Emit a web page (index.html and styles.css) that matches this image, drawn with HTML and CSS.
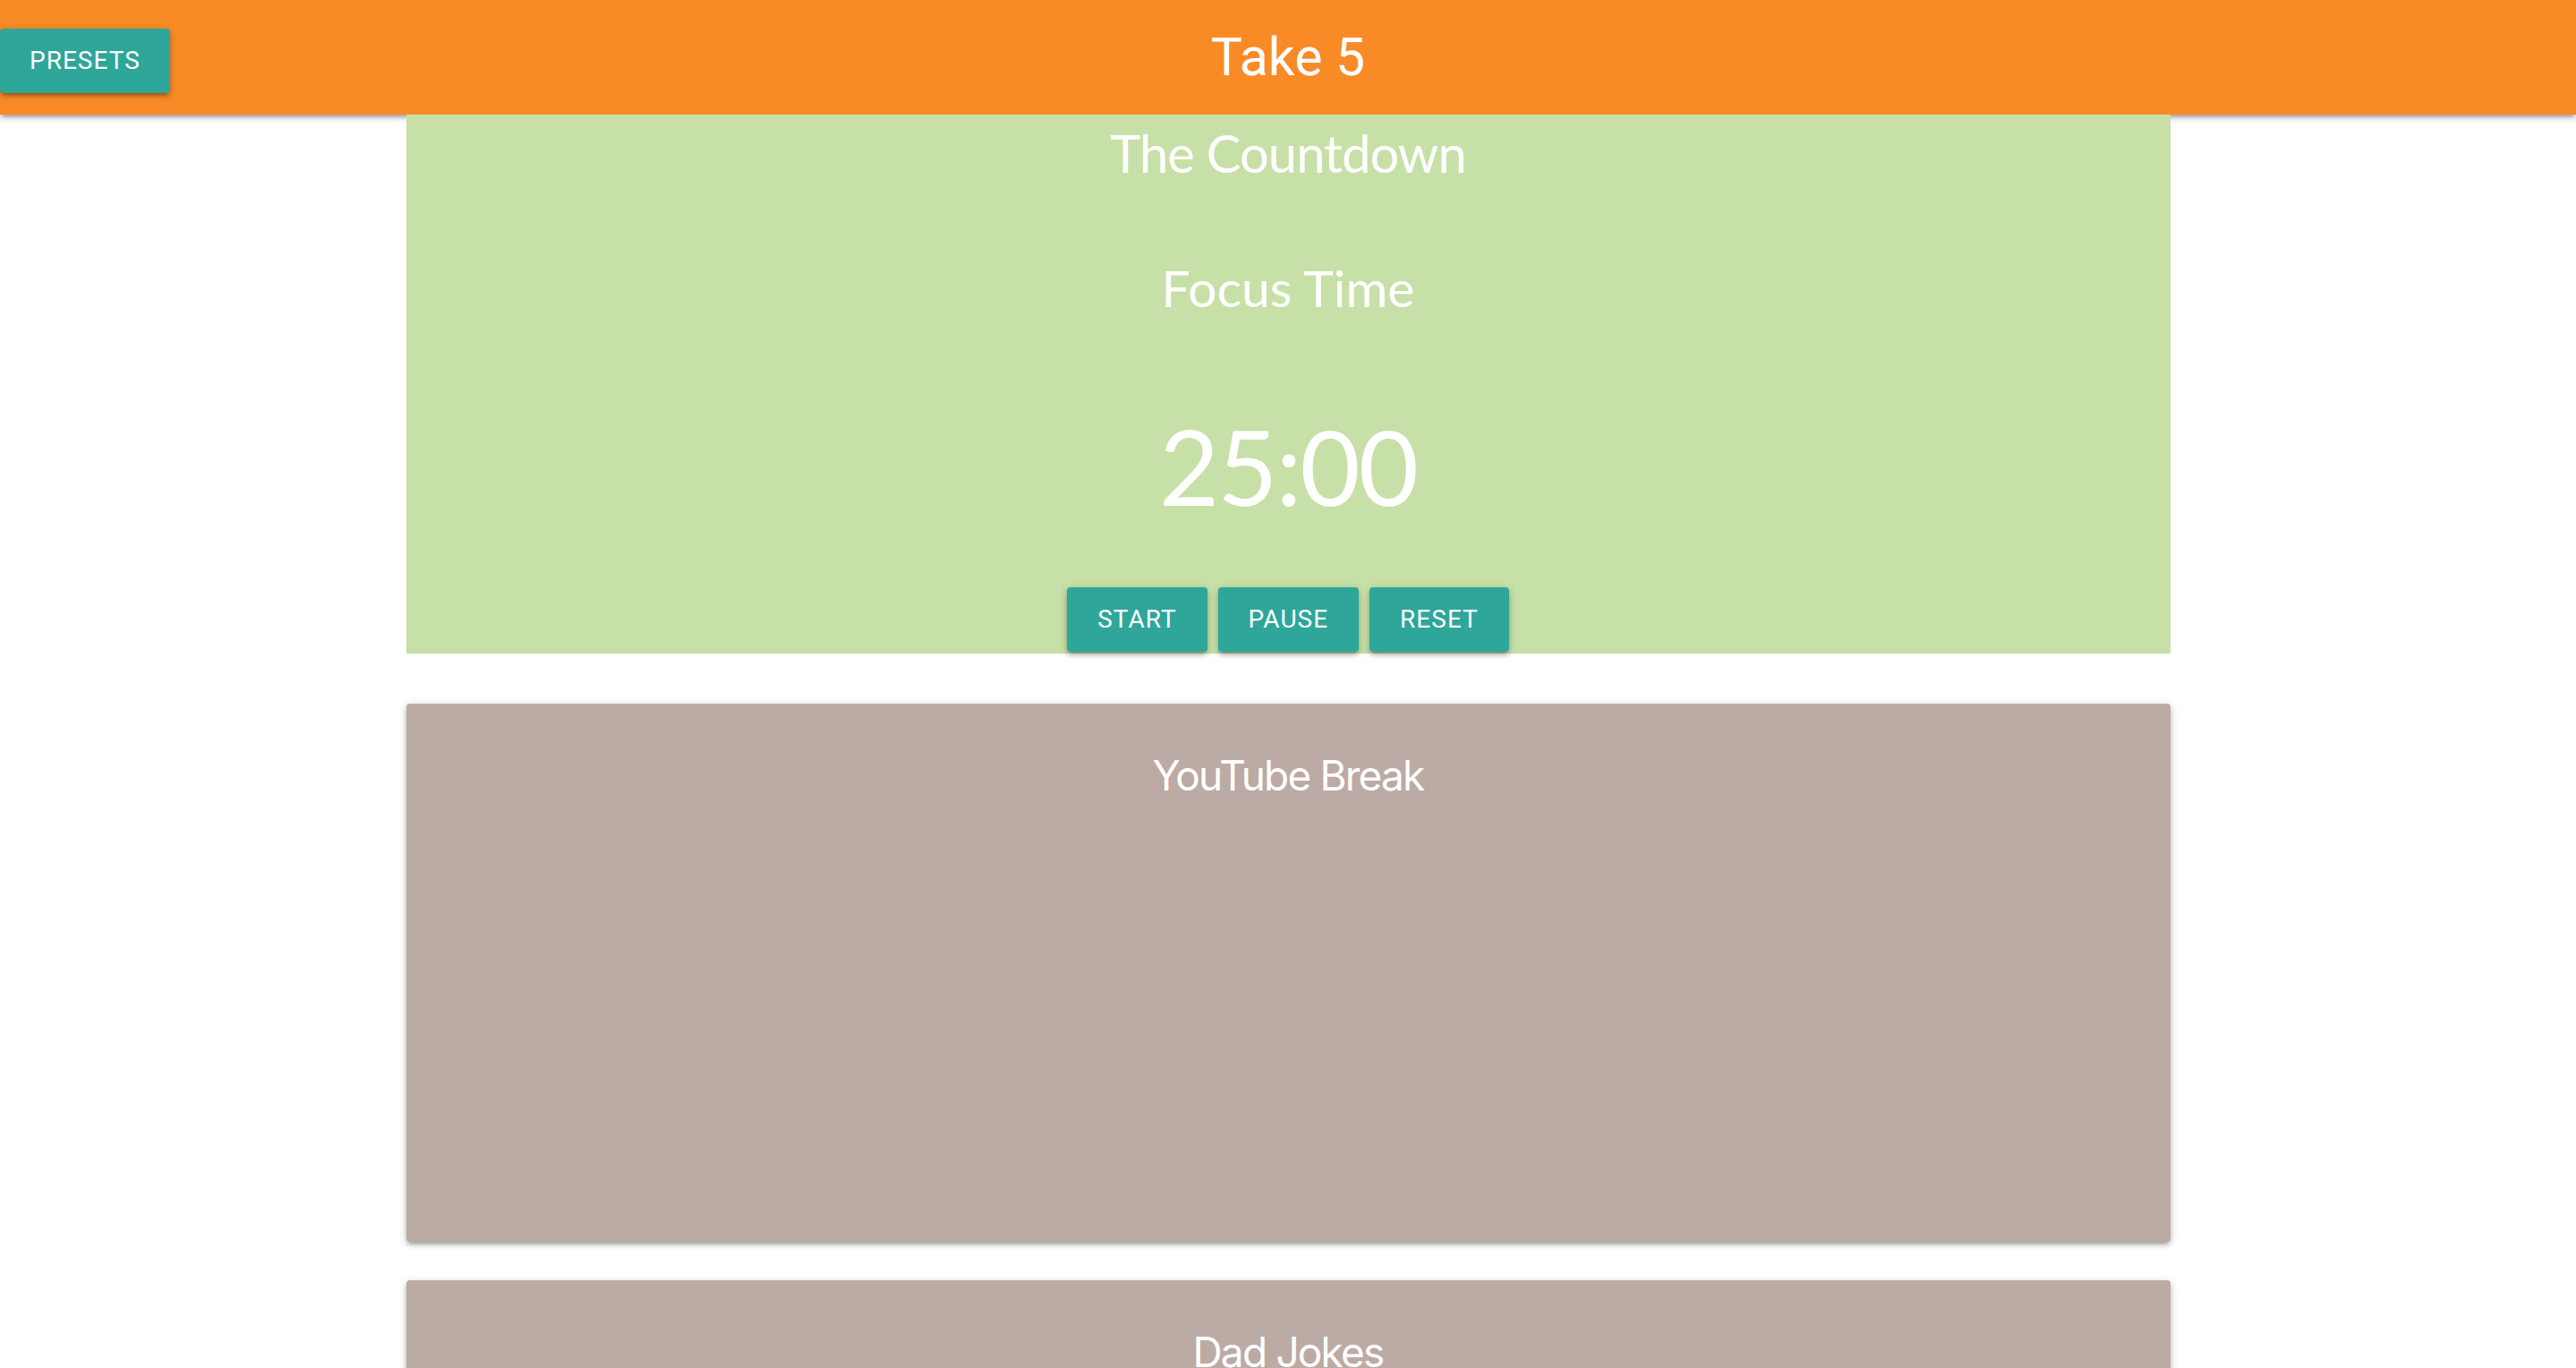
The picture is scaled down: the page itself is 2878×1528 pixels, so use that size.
FILE: index.html
```html
<!DOCTYPE html>
<html lang="en">
<head>
<meta charset="utf-8">
<title>Take 5</title>
<link rel="stylesheet" href="styles.css">
</head>
<body>
<header class="topbar">
  <div class="topbar-left"><button class="btn btn-presets">Presets</button></div>
  <h1 class="brand">Take 5</h1>
  <div class="topbar-right"></div>
</header>
<main class="container">
  <section class="countdown">
    <h2 class="cd-title">The Countdown</h2>
    <h3 class="cd-mode">Focus Time</h3>
    <div class="cd-time">25:00</div>
    <div class="cd-actions">
      <button class="btn">Start</button>
      <button class="btn">Pause</button>
      <button class="btn">Reset</button>
    </div>
  </section>
  <section class="card">
    <h4 class="card-title">YouTube Break</h4>
  </section>
  <section class="card card-last">
    <h4 class="card-title">Dad Jokes</h4>
  </section>
</main>
</body>
</html>
```
FILE: styles.css
```css
html, body {
  margin: 0;
  padding: 0;
  background: #ffffff;
  overflow: hidden;
}

body {
  font-family: Roboto, "Liberation Sans", sans-serif;
  color: #ffffff;
}

.topbar {
  display: grid;
  grid-template-columns: 1fr auto 1fr;
  height: 128px;
  background: #f98b26;
  box-shadow: 0 4px 4px 0 rgba(0,0,0,.14), 0 6px 2px -4px rgba(0,0,0,.12), 0 2px 10px 0 rgba(0,0,0,.2);
}

.topbar-left {
  display: flex;
  align-items: flex-start;
  padding-top: 32px;
}

.brand {
  margin: 0;
  font-family: Roboto, "Liberation Sans", sans-serif;
  font-weight: 400;
  font-size: 59px;
  line-height: 128px;
  color: #ffffff;
}

.btn {
  height: 72px;
  padding: 0 34px;
  border: none;
  border-radius: 4px;
  background: #2ea69a;
  color: #ffffff;
  font-family: Roboto, "Liberation Sans", sans-serif;
  font-size: 28px;
  font-weight: 400;
  letter-spacing: 1px;
  text-transform: uppercase;
  line-height: 72px;
  box-shadow: 0 4px 4px 0 rgba(0,0,0,.14), 0 6px 2px -4px rgba(0,0,0,.12), 0 2px 10px 0 rgba(0,0,0,.2);
}

.btn-presets {
  padding: 0 33px;
}

.container {
  width: 1971px;
  margin: 0 auto;
}

.countdown {
  background: #c7e0a7;
  display: flex;
  flex-direction: column;
  align-items: center;
  padding: 14px 0 2px;
  font-family: Lato, "Open Sans", sans-serif;
}

.cd-title {
  margin: 0;
  font-weight: 400;
  font-size: 58px;
  line-height: 1;
  letter-spacing: -1px;
}

.cd-mode {
  margin: 93px 0 0;
  font-weight: 400;
  font-size: 57px;
  line-height: 1;
}

.cd-time {
  margin-top: 113px;
  font-size: 116px;
  line-height: 1;
  letter-spacing: -2px;
}

.cd-actions {
  display: flex;
  gap: 12px;
  margin-top: 77px;
}

.card {
  background: #bcaaa4;
  border-radius: 4px;
  height: 601px;
  margin-top: 56px;
  display: flex;
  flex-direction: column;
  align-items: center;
  box-shadow: 0 4px 4px 0 rgba(0,0,0,.14), 0 6px 2px -4px rgba(0,0,0,.12), 0 2px 10px 0 rgba(0,0,0,.2);
}

.card-last {
  margin-top: 43px;
}

.card-title {
  margin: 57px 0 0;
  font-family: Inter, Roboto, sans-serif;
  font-weight: 400;
  font-size: 46px;
  line-height: 1;
  letter-spacing: -1.8px;
}
```
